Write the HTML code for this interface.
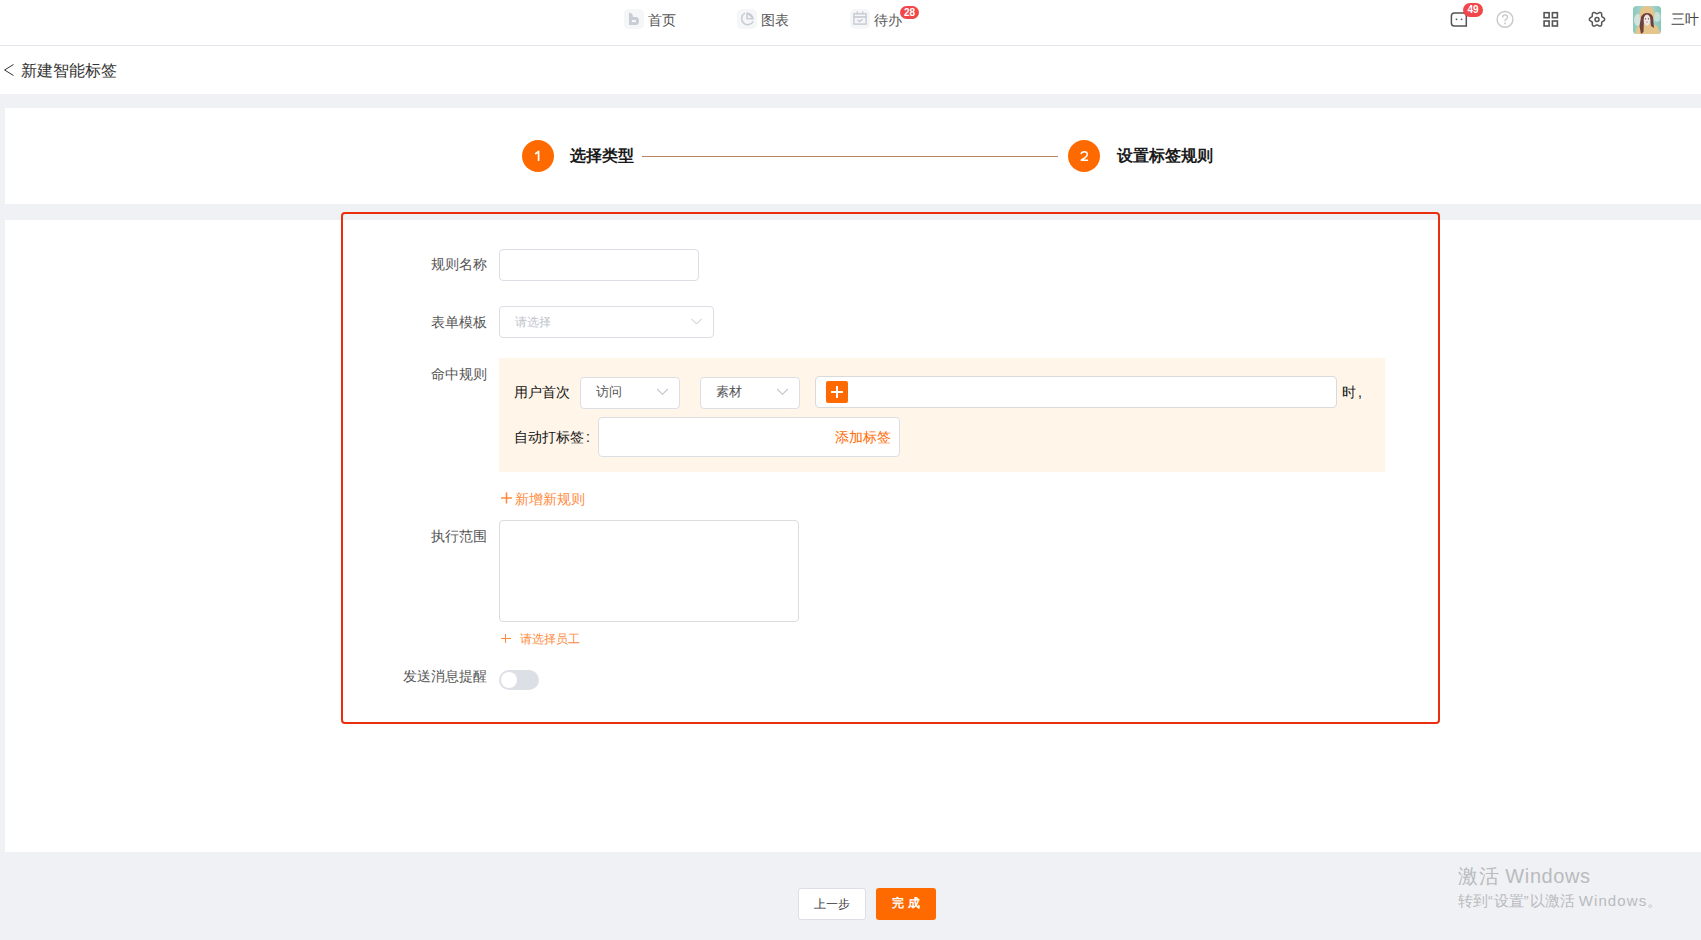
<!DOCTYPE html>
<html><head><meta charset="utf-8">
<style>
*{box-sizing:border-box;margin:0;padding:0}
html,body{width:1701px;height:940px;overflow:hidden;background:#f0f1f4;font-family:"Liberation Sans",sans-serif;color:#333}
.abs{position:absolute}
#hdr{position:absolute;left:0;top:0;width:1701px;height:46px;background:#fff;border-bottom:1px solid #e5e6eb}
#title{position:absolute;left:0;top:46px;width:1701px;height:48px;background:#fff}
.navic{position:absolute;top:9px;width:20px;height:20px;border-radius:5px;background:#f5f6f8}
.navtx{position:absolute;top:11px;font-size:14px;line-height:19px;color:#555}
.badge{position:absolute;height:13px;border-radius:7px;background:#f0474a;color:#fff;font-size:10px;line-height:13px;font-weight:bold;text-align:center}
#card1{position:absolute;left:5px;top:108px;width:1696px;height:96px;background:#fff}
#card2{position:absolute;left:5px;top:220px;width:1696px;height:632px;background:#fff}
.circle{position:absolute;overflow:hidden;width:32px;height:32px;border-radius:50%;background:#ff6a00;color:#fff;font-size:14px;line-height:32px;text-align:center}
.steptx{position:absolute;font-size:16px;font-weight:bold;color:#1a1a1a;line-height:20px}
#redbox{position:absolute;left:341px;top:212px;width:1099px;height:512px;border:2px solid #e8300e;border-radius:4px}
.lbl{position:absolute;font-size:14px;color:#555;line-height:18px;text-align:right;white-space:nowrap}
.inp{position:absolute;background:#fff;border:1px solid #dcdee5;border-radius:4px}
.chev{position:absolute;width:8px;height:8px;border-right:1px solid #b8bcc6;border-bottom:1px solid #b8bcc6;transform:rotate(45deg)}
.btxt{position:absolute;font-size:14px;color:#111;line-height:18px;white-space:nowrap}
.orange{color:#ff7a1a}
</style></head><body>
<div id="hdr">
  <div class="navic" style="left:624px"><svg width="20" height="20" viewBox="0 0 20 20"><path d="M5 3.8 Q8.6 4 9 7.6 L9 8 L12 8 Q15 8.3 15 12 Q15 16 11.5 16 L5 16 Z M7.8 10.9 L7.8 13.2 L11.9 13.2 L11.9 10.9 Z" fill="#c8ccd4" fill-rule="evenodd"/></svg></div>
  <div class="navtx" style="left:648px">首页</div>
  <div class="navic" style="left:737px"><svg width="20" height="20" viewBox="0 0 20 20"><path d="M8 4.1 A6.1 6.1 0 1 0 16.2 12.3" fill="none" stroke="#c8ccd4" stroke-width="1.5"/><path d="M9.3 3.2 L9.3 10.6 L16.8 10.6 A7.5 7.5 0 0 0 9.3 3.2 Z M10.9 5.3 L10.9 9.1 L14.6 9.1 Z" fill="#c8ccd4" fill-rule="evenodd"/></svg></div>
  <div class="navtx" style="left:761px">图表</div>
  <div class="navic" style="left:850px"><svg width="20" height="20" viewBox="0 0 20 20"><rect x="3.9" y="4.7" width="12.2" height="10.4" fill="none" stroke="#c8ccd4" stroke-width="1.5"/><rect x="3.5" y="7.1" width="13" height="1.7" fill="#c8ccd4"/><rect x="6.6" y="2.3" width="1.4" height="3" fill="#c8ccd4"/><rect x="12" y="2.3" width="1.4" height="3" fill="#c8ccd4"/><path d="M7.4 10.9 L9.5 12.6 L12.6 10.1" fill="none" stroke="#c8ccd4" stroke-width="1.4"/></svg></div>
  <div class="navtx" style="left:874px">待办</div>
  <div class="badge" style="left:900px;top:6px;width:19px">28</div>
  <svg class="abs" style="left:1444px;top:4px" width="80" height="30" viewBox="0 0 80 30">
    <path d="M22.3 22.1 L22.3 12 Q22.3 8.9 19.2 8.9 L10.5 8.9 Q7.4 8.9 7.4 12 L7.4 19 Q7.4 22.1 10.5 22.1 Z" fill="none" stroke="#555" stroke-width="1.5"/>
    <circle cx="12.5" cy="15.3" r="0.9" fill="#555"/><circle cx="17.6" cy="15.3" r="0.9" fill="#555"/>
    <circle cx="61" cy="15.4" r="7.9" fill="none" stroke="#c8c8c8" stroke-width="1.4"/>
    <path d="M58.6 13.6 Q58.6 10.9 61 10.9 Q63.5 10.9 63.5 13.2 Q63.5 14.6 61.9 15.4 Q61 15.9 61 17.3" fill="none" stroke="#c8c8c8" stroke-width="1.4"/>
    <rect x="60.2" y="18.6" width="1.6" height="1.6" fill="#c8c8c8"/>
  </svg>
  <div class="badge" style="left:1463px;top:3px;width:20px;height:14px;line-height:14px">49</div>
  <svg class="abs" style="left:1536px;top:4px" width="80" height="30" viewBox="0 0 80 30">
    <rect x="8.1" y="8.7" width="5" height="5" fill="none" stroke="#555" stroke-width="1.6"/>
    <rect x="16.4" y="8.7" width="5" height="5" fill="none" stroke="#555" stroke-width="1.6"/>
    <rect x="8.1" y="17" width="5" height="5" fill="none" stroke="#555" stroke-width="1.6"/>
    <rect x="16.4" y="17" width="5" height="5" fill="none" stroke="#555" stroke-width="1.6"/>
    <path d="M68.65 15.30 L68.63 15.43 L68.61 15.57 L68.59 15.70 L68.55 15.83 L68.50 15.96 L68.44 16.08 L68.37 16.20 L68.28 16.32 L68.18 16.44 L68.07 16.55 L67.95 16.65 L67.83 16.75 L67.69 16.84 L67.55 16.93 L67.41 17.02 L67.27 17.10 L67.13 17.17 L67.00 17.25 L66.86 17.32 L66.74 17.39 L66.62 17.46 L66.50 17.52 L66.40 17.59 L66.30 17.66 L66.20 17.73 L66.12 17.80 L66.04 17.87 L65.97 17.94 L65.91 18.02 L65.86 18.11 L65.82 18.19 L65.78 18.29 L65.75 18.38 L65.72 18.48 L65.70 18.59 L65.69 18.71 L65.68 18.83 L65.68 18.95 L65.68 19.09 L65.68 19.22 L65.68 19.37 L65.68 19.52 L65.69 19.67 L65.69 19.83 L65.69 19.99 L65.69 20.16 L65.68 20.32 L65.67 20.49 L65.65 20.65 L65.62 20.80 L65.58 20.95 L65.53 21.09 L65.47 21.23 L65.40 21.35 L65.32 21.47 L65.23 21.57 L65.14 21.67 L65.04 21.76 L64.93 21.84 L64.82 21.92 L64.70 21.98 L64.58 22.03 L64.45 22.07 L64.32 22.10 L64.18 22.12 L64.04 22.13 L63.90 22.13 L63.75 22.12 L63.61 22.09 L63.46 22.05 L63.31 22.00 L63.16 21.94 L63.01 21.87 L62.86 21.79 L62.72 21.71 L62.58 21.63 L62.44 21.55 L62.31 21.47 L62.18 21.39 L62.06 21.31 L61.94 21.24 L61.83 21.18 L61.71 21.12 L61.61 21.07 L61.50 21.02 L61.40 20.98 L61.30 20.95 L61.20 20.93 L61.10 20.92 L61.00 20.91 L60.90 20.92 L60.80 20.93 L60.70 20.95 L60.60 20.98 L60.50 21.02 L60.39 21.07 L60.29 21.12 L60.17 21.18 L60.06 21.24 L59.94 21.31 L59.82 21.39 L59.69 21.47 L59.56 21.55 L59.42 21.63 L59.28 21.71 L59.14 21.79 L58.99 21.87 L58.84 21.94 L58.69 22.00 L58.54 22.05 L58.39 22.09 L58.25 22.12 L58.10 22.13 L57.96 22.13 L57.82 22.12 L57.68 22.10 L57.55 22.07 L57.42 22.03 L57.30 21.98 L57.18 21.92 L57.07 21.84 L56.96 21.76 L56.86 21.67 L56.77 21.57 L56.68 21.47 L56.60 21.35 L56.53 21.23 L56.47 21.09 L56.42 20.95 L56.38 20.80 L56.35 20.65 L56.33 20.49 L56.32 20.32 L56.31 20.16 L56.31 19.99 L56.31 19.83 L56.31 19.67 L56.32 19.52 L56.32 19.37 L56.32 19.22 L56.32 19.09 L56.32 18.95 L56.32 18.83 L56.31 18.71 L56.30 18.59 L56.28 18.48 L56.25 18.38 L56.22 18.29 L56.18 18.19 L56.14 18.11 L56.09 18.02 L56.03 17.94 L55.96 17.87 L55.88 17.80 L55.80 17.73 L55.70 17.66 L55.60 17.59 L55.50 17.52 L55.38 17.46 L55.26 17.39 L55.14 17.32 L55.00 17.25 L54.87 17.17 L54.73 17.10 L54.59 17.02 L54.45 16.93 L54.31 16.84 L54.17 16.75 L54.05 16.65 L53.93 16.55 L53.82 16.44 L53.72 16.32 L53.63 16.20 L53.56 16.08 L53.50 15.96 L53.45 15.83 L53.41 15.70 L53.39 15.57 L53.37 15.43 L53.35 15.30 L53.37 15.17 L53.39 15.03 L53.41 14.90 L53.45 14.77 L53.50 14.64 L53.56 14.52 L53.63 14.40 L53.72 14.28 L53.82 14.16 L53.93 14.05 L54.05 13.95 L54.17 13.85 L54.31 13.76 L54.45 13.67 L54.59 13.58 L54.73 13.50 L54.87 13.43 L55.00 13.35 L55.14 13.28 L55.26 13.21 L55.38 13.14 L55.50 13.08 L55.60 13.01 L55.70 12.94 L55.80 12.87 L55.88 12.80 L55.96 12.73 L56.03 12.66 L56.09 12.58 L56.14 12.49 L56.18 12.41 L56.22 12.31 L56.25 12.22 L56.28 12.12 L56.30 12.01 L56.31 11.89 L56.32 11.77 L56.32 11.65 L56.32 11.51 L56.32 11.38 L56.32 11.23 L56.32 11.08 L56.31 10.93 L56.31 10.77 L56.31 10.61 L56.31 10.44 L56.32 10.28 L56.33 10.11 L56.35 9.95 L56.38 9.80 L56.42 9.65 L56.47 9.51 L56.53 9.37 L56.60 9.25 L56.68 9.13 L56.77 9.03 L56.86 8.93 L56.96 8.84 L57.07 8.76 L57.18 8.68 L57.30 8.62 L57.42 8.57 L57.55 8.53 L57.68 8.50 L57.82 8.48 L57.96 8.47 L58.10 8.47 L58.25 8.48 L58.39 8.51 L58.54 8.55 L58.69 8.60 L58.84 8.66 L58.99 8.73 L59.14 8.81 L59.28 8.89 L59.42 8.97 L59.56 9.05 L59.69 9.13 L59.82 9.21 L59.94 9.29 L60.06 9.36 L60.17 9.42 L60.29 9.48 L60.39 9.53 L60.50 9.58 L60.60 9.62 L60.70 9.65 L60.80 9.67 L60.90 9.68 L61.00 9.69 L61.10 9.68 L61.20 9.67 L61.30 9.65 L61.40 9.62 L61.50 9.58 L61.61 9.53 L61.71 9.48 L61.83 9.42 L61.94 9.36 L62.06 9.29 L62.18 9.21 L62.31 9.13 L62.44 9.05 L62.58 8.97 L62.72 8.89 L62.86 8.81 L63.01 8.73 L63.16 8.66 L63.31 8.60 L63.46 8.55 L63.61 8.51 L63.75 8.48 L63.90 8.47 L64.04 8.47 L64.18 8.48 L64.32 8.50 L64.45 8.53 L64.58 8.57 L64.70 8.62 L64.82 8.68 L64.93 8.76 L65.04 8.84 L65.14 8.93 L65.23 9.03 L65.32 9.13 L65.40 9.25 L65.47 9.37 L65.53 9.51 L65.58 9.65 L65.62 9.80 L65.65 9.95 L65.67 10.11 L65.68 10.28 L65.69 10.44 L65.69 10.61 L65.69 10.77 L65.69 10.93 L65.68 11.08 L65.68 11.23 L65.68 11.38 L65.68 11.51 L65.68 11.65 L65.68 11.77 L65.69 11.89 L65.70 12.01 L65.72 12.12 L65.75 12.22 L65.78 12.31 L65.82 12.41 L65.86 12.49 L65.91 12.58 L65.97 12.66 L66.04 12.73 L66.12 12.80 L66.20 12.87 L66.30 12.94 L66.40 13.01 L66.50 13.08 L66.62 13.14 L66.74 13.21 L66.86 13.28 L67.00 13.35 L67.13 13.43 L67.27 13.50 L67.41 13.58 L67.55 13.67 L67.69 13.76 L67.83 13.85 L67.95 13.95 L68.07 14.05 L68.18 14.16 L68.28 14.28 L68.37 14.40 L68.44 14.52 L68.50 14.64 L68.55 14.77 L68.59 14.90 L68.61 15.03 L68.63 15.17 Z" fill="none" stroke="#555" stroke-width="1.5" stroke-linejoin="round"/>
    <circle cx="61" cy="15.4" r="2" fill="none" stroke="#555" stroke-width="1.5"/>
  </svg>
  <svg class="abs" style="left:1633px;top:6px" width="28" height="28" viewBox="0 0 28 28">
    <defs><clipPath id="av"><rect width="28" height="28" rx="3.5"/></clipPath>
    <linearGradient id="avbg" x1="0" y1="0" x2="1" y2="0"><stop offset="0" stop-color="#8cc8bb"/><stop offset="0.5" stop-color="#b9dcd2"/><stop offset="1" stop-color="#86c6b8"/></linearGradient></defs>
    <g clip-path="url(#av)">
      <rect width="28" height="28" fill="url(#avbg)"/>
      <ellipse cx="5" cy="14" rx="4" ry="6" fill="#dfe9e2" opacity="0.8"/>
      <ellipse cx="24" cy="11" rx="3.5" ry="5" fill="#dde8e4" opacity="0.7"/>
      <path d="M2 28 L4 21 Q14 15 24 20 L28 28 Z" fill="#e6c58c"/>
      <path d="M6.5 11 Q6.5 0 14 0 Q21.5 0 21.5 10 L21 12 L7 12 Z" fill="#e7c48a"/>
      <path d="M8 11 Q10 7 14 7 Q18.5 7 20 11 L21 22 L18 20 L17 12 Q14 9.5 11 12 L10.5 26 L8 28 L6.5 20 Z" fill="#70403a"/>
      <ellipse cx="14" cy="14" rx="3.3" ry="5.5" fill="#f0e4e4"/>
      <circle cx="12.6" cy="12.8" r="0.6" fill="#4a2b2b"/><circle cx="15.4" cy="12.8" r="0.6" fill="#4a2b2b"/>
      <circle cx="14" cy="16.2" r="0.9" fill="#eaa9a0"/>
    </g>
  </svg>
  <div class="navtx" style="left:1671px;top:10px;color:#444">三叶</div>
</div>
<div id="title">
  <svg class="abs" style="left:0;top:0" width="20" height="48"><polyline points="13.5,18.5 4.6,24 13.5,29.5" fill="none" stroke="#333" stroke-width="1"/></svg>
  <div class="abs" style="left:21px;top:15px;font-size:16px;line-height:20px;color:#333">新建智能标签</div>
</div>
<div id="card1"></div>
<div class="circle" style="left:522px;top:140px"><svg class="abs" style="left:0;top:0" width="32" height="32"><path d="M13.2 14 L16.6 11.5 L16.6 20.9" fill="none" stroke="#fff" stroke-width="1.7" stroke-linejoin="round"/></svg></div>
<div class="steptx" style="left:570px;top:146px">选择类型</div>
<div class="abs" style="left:642px;top:156px;width:416px;height:1px;background:#b8845f"></div>
<div class="circle" style="left:1068px;top:140px"><svg class="abs" style="left:0;top:0" width="32" height="32"><path d="M13 14 Q13.5 11.7 16.3 11.7 Q19.3 11.7 19.3 14.3 Q19.3 15.9 17.3 17.5 L13.2 20.2 L20.1 20.2" fill="none" stroke="#fff" stroke-width="1.5" stroke-linejoin="round"/></svg></div>
<div class="steptx" style="left:1117px;top:146px">设置标签规则</div>
<div id="card2"></div>
<div id="redbox"></div>

<div class="lbl" style="right:1214px;top:255px">规则名称</div>
<div class="inp" style="left:499px;top:249px;width:200px;height:32px"></div>
<div class="lbl" style="right:1214px;top:313px">表单模板</div>
<div class="inp" style="left:499px;top:306px;width:215px;height:32px"></div>
<div class="abs" style="left:515px;top:314px;font-size:12px;color:#c0c4cc;line-height:16px">请选择</div>
<svg class="abs" style="left:690px;top:317px" width="14" height="9"><polyline points="1.3,1.8 6.5,7 11.7,1.8" fill="none" stroke="#c0c4cc" stroke-width="1"/></svg>

<div class="lbl" style="right:1214px;top:365px">命中规则</div>
<div class="abs" style="left:499px;top:358px;width:886px;height:114px;background:#fff5e8"></div>
<div class="btxt" style="left:514px;top:383px">用户首次</div>
<div class="inp" style="left:580px;top:377px;width:100px;height:32px"></div>
<div class="abs" style="left:596px;top:383px;font-size:13px;line-height:18px;color:#555">访问</div>
<svg class="abs" style="left:656px;top:387px" width="14" height="9"><polyline points="1.2,2 6.5,7.3 11.8,2" fill="none" stroke="#c0c4cc" stroke-width="1.1"/></svg>
<div class="inp" style="left:700px;top:377px;width:100px;height:32px"></div>
<div class="abs" style="left:716px;top:383px;font-size:13px;line-height:18px;color:#555">素材</div>
<svg class="abs" style="left:776px;top:387px" width="14" height="9"><polyline points="1.2,2 6.5,7.3 11.8,2" fill="none" stroke="#c0c4cc" stroke-width="1.1"/></svg>
<div class="inp" style="left:815px;top:376px;width:522px;height:32px;border-color:#dadada"></div>
<div class="abs" style="left:826px;top:381px;width:22px;height:22px;border-radius:2px;background:#ff6a00"></div><div class="abs" style="left:831px;top:391px;width:12px;height:2px;background:#fff"></div><div class="abs" style="left:836px;top:386px;width:2px;height:12px;background:#fff"></div>
<div class="btxt" style="left:1342px;top:383px">时<span style="margin-left:2px">,</span></div>
<div class="btxt" style="left:514px;top:428px">自动打标签<span style="margin-left:2px">:</span></div>
<div class="inp" style="left:598px;top:417px;width:302px;height:40px"></div>
<div class="abs" style="left:835px;top:428px;font-size:14px;line-height:18px;color:#ff6a00">添加标签</div>

<svg class="abs" style="left:500px;top:491px" width="14" height="14"><path d="M1 7 H12 M6.5 1.4 V12.6" stroke="#ff8a3d" stroke-width="1.6"/></svg>
<div class="abs" style="left:515px;top:490px;font-size:14px;line-height:18px;color:#ff8a3d">新增新规则</div>
<div class="lbl" style="right:1214px;top:527px">执行范围</div>
<div class="inp" style="left:499px;top:520px;width:300px;height:102px;border-color:#dcdcdc"></div>
<div class="abs" style="left:501px;top:638px;width:10px;height:1px;background:#ff8a3d"></div><div class="abs" style="left:505px;top:634px;width:1px;height:9px;background:#ff8a3d"></div>
<div class="abs" style="left:520px;top:631px;font-size:12px;line-height:16px;color:#ff8a3d">请选择员工</div>
<div class="lbl" style="right:1214px;top:667px">发送消息提醒</div>
<div class="abs" style="left:499px;top:670px;width:40px;height:20px;border-radius:10px;background:#dcdfe6"></div>
<div class="abs" style="left:501px;top:672px;width:16px;height:16px;border-radius:50%;background:#fff"></div>

<div class="abs" style="left:798px;top:888px;width:68px;height:32px;background:#fff;border:1px solid #dcdfe6;border-radius:3px;font-size:12px;line-height:30px;text-align:center;color:#333">上一步</div>
<div class="abs" style="left:876px;top:888px;width:60px;height:32px;background:#ff6a00;border-radius:3px;font-size:12px;line-height:31px;text-align:center;color:#fff;font-weight:bold">完 成</div>
<div class="abs" style="left:1458px;top:864px;font-size:20px;line-height:24px;color:#b9bbbe;letter-spacing:0.6px">激活 Windows</div>
<div class="abs" style="left:1458px;top:892px;font-size:14.5px;line-height:18px;color:#b9bbbe;white-space:nowrap">转到<span style="letter-spacing:1px">“</span>设置<span style="letter-spacing:1px">”</span>以激活 <span style="font-size:15px;letter-spacing:1.1px">Windows</span>。</div>
</body></html>
